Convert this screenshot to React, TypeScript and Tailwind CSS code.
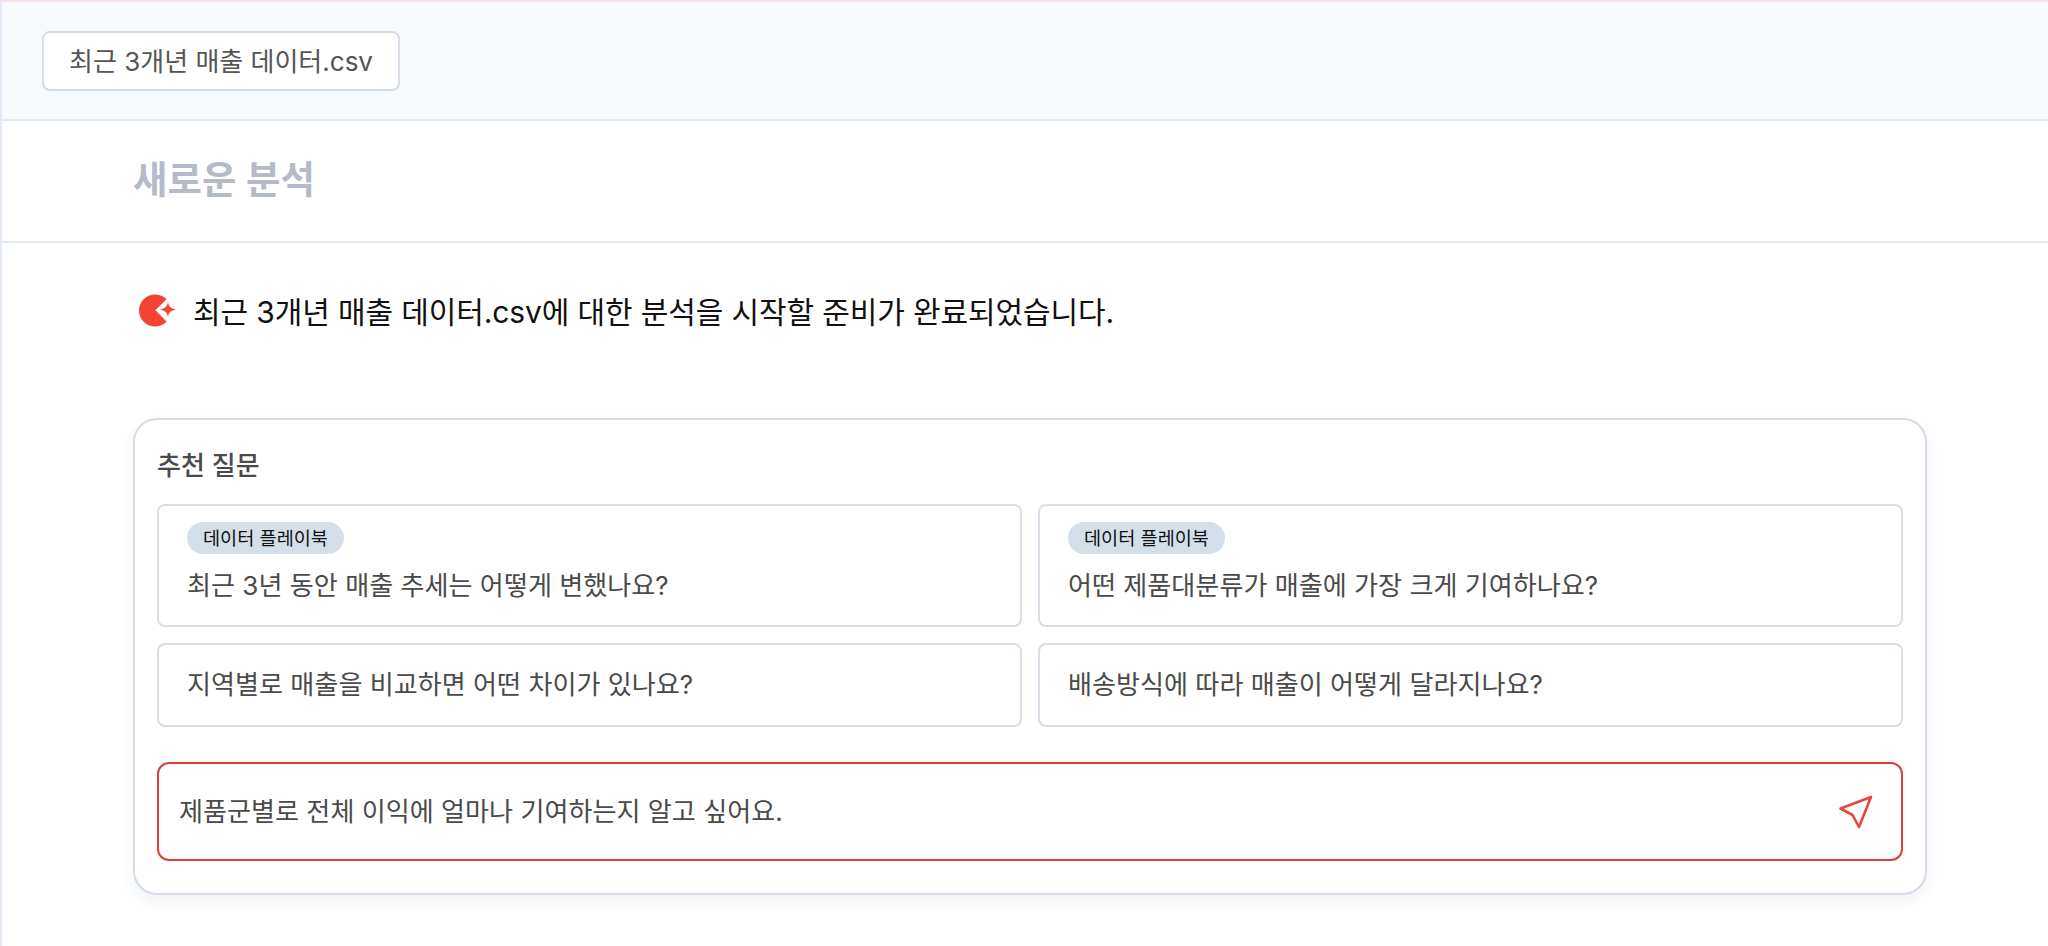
const font = { fontFamily: '"Inter", "Noto Sans CJK KR", sans-serif' };

function Logo() {
  return (
    <svg width="38" height="34" viewBox="0 0 38 34" className="shrink-0">
      <path d="M16 0.5C20.4 0.5 24.6 2.3 27.7 5L16.5 16.3L27.7 27.7C24.6 30.8 20.4 32.5 16 32.5C7.2 32.5 0 25.3 0 16.5C0 7.7 7.2 0.5 16 0.5Z" fill="#f44336" />
      <path d="M29 7.5C29.6 12.4 31.4 14.6 37 15.5C31.4 16.4 29.6 18.6 29 23.5C28.4 18.6 26.2 16.4 21 15.5C26.2 14.6 28.4 12.4 29 7.5Z" fill="#f44336" />
    </svg>
  );
}

function SendIcon() {
  return (
    <svg width="36" height="36" viewBox="0 0 36 36" fill="none" stroke="#e8453c" strokeWidth="2.6" strokeLinejoin="round" strokeLinecap="round" className="-mt-[2px]">
      <path d="M34 4L3.5 15.5L15.5 22L22 34L34 4Z" />
    </svg>
  );
}

function Question({ text, tag }: { text: string; tag?: boolean }) {
  return (
    <button className={`flex flex-col items-start rounded-lg border-2 border-[#d8dee7] bg-white px-[28px] text-left ${tag ? 'h-[123px] pt-[16px]' : 'h-[84px] justify-center'}`}>
      {tag && (
        <span className="mb-[14px] flex h-[32px] items-center rounded-full bg-[#d5dfe9] px-[16px] pt-[0px] text-[18.6px] leading-[30px] text-[#111]">
          데이터 플레이북
        </span>
      )}
      <span className="text-[26.1px] leading-[36px] text-[#4a4a4a]">{text}</span>
    </button>
  );
}

export default function App() {
  return (
    <div style={font} className="h-[946px] overflow-hidden border-t-2 border-l-2 border-t-[#fbdfe2] border-l-[#e3eaf7] bg-white">
      {/* file bar */}
      <div className="flex h-[119px] items-start border-b-2 border-[#e3eaf2] bg-[#f6fafd] pt-[29px] pl-[40px]">
        <div className="flex h-[60px] w-[358px] items-center justify-center rounded-lg border-2 border-[#d5dce6] bg-white text-[26px] text-[#555]">
          최근 3개년 매출 데이터.csv
        </div>
      </div>

      {/* title */}
      <div className="flex h-[122px] items-center border-b-2 border-[#e3eaf2] pb-[2px] pl-[131px]">
        <h1 className="text-[37.5px] font-semibold text-[#b5bac8]">새로운 분석</h1>
      </div>

      <div className="pr-[121px] pl-[131px]">
        {/* status message */}
        <div className="flex h-[175px] items-start gap-[16px] pt-[51px] pl-[6px]">
          <Logo />
          <p className="text-[30px] leading-[36px] tracking-[-0.12px] text-[#111]">
            최근 3개년 매출 데이터.csv에 대한 분석을 시작할 준비가 완료되었습니다.
          </p>
        </div>

        {/* suggested questions */}
        <div className="rounded-[24px] border-2 border-[#d5dce6] bg-white px-[22px] pt-[28px] pb-[32px] shadow-[0_6px_14px_rgba(100,120,160,0.1)]">
          <h2 className="mb-[20px] text-[26px] leading-[36px] font-medium text-[#4a4a4a]">추천 질문</h2>
          <div className="grid grid-cols-2 gap-[16px]">
            <Question tag text="최근 3년 동안 매출 추세는 어떻게 변했나요?" />
            <Question tag text="어떤 제품대분류가 매출에 가장 크게 기여하나요?" />
            <Question text="지역별로 매출을 비교하면 어떤 차이가 있나요?" />
            <Question text="배송방식에 따라 매출이 어떻게 달라지나요?" />
          </div>
          <div className="mt-[35px] flex h-[99px] items-center justify-between rounded-xl border-2 border-[#dc3f3a] pr-[28px] pl-[20px]">
            <span className="text-[26.1px] text-[#4a4a4a]">제품군별로 전체 이익에 얼마나 기여하는지 알고 싶어요.</span>
            <SendIcon />
          </div>
        </div>
      </div>
    </div>
  );
}
